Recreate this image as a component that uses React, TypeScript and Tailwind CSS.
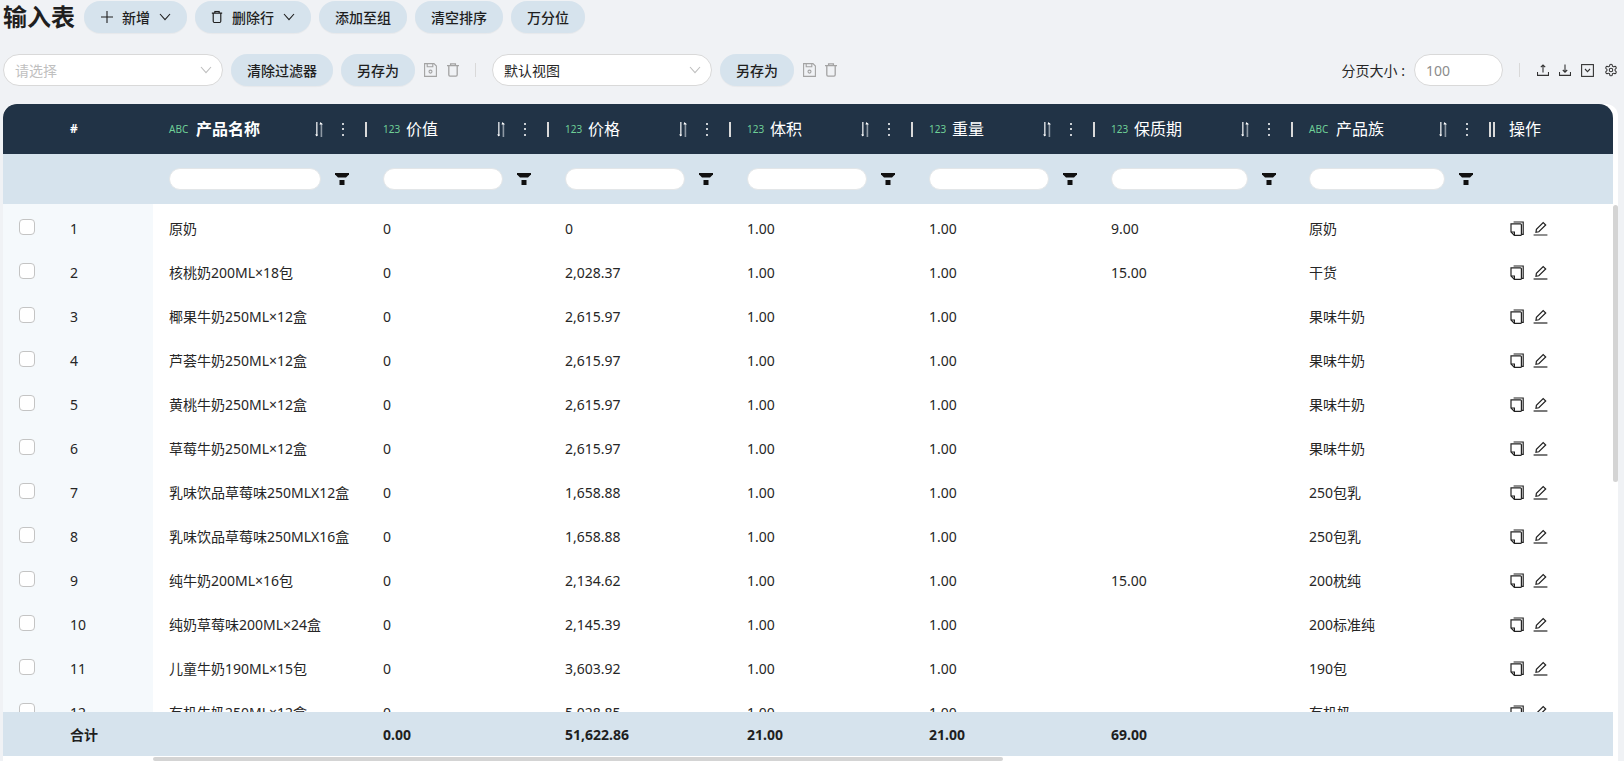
import React from "react";

const rows: [string, string, string, string, string][] = [
  ["原奶", "0", "9.00", "原奶", ""],
  ["核桃奶200ML×18包", "2,028.37", "15.00", "干货", ""],
  ["椰果牛奶250ML×12盒", "2,615.97", "", "果味牛奶", ""],
  ["芦荟牛奶250ML×12盒", "2,615.97", "", "果味牛奶", ""],
  ["黄桃牛奶250ML×12盒", "2,615.97", "", "果味牛奶", ""],
  ["草莓牛奶250ML×12盒", "2,615.97", "", "果味牛奶", ""],
  ["乳味饮品草莓味250MLX12盒", "1,658.88", "", "250包乳", ""],
  ["乳味饮品草莓味250MLX16盒", "1,658.88", "", "250包乳", ""],
  ["纯牛奶200ML×16包", "2,134.62", "15.00", "200枕纯", ""],
  ["纯奶草莓味200ML×24盒", "2,145.39", "", "200标准纯", ""],
  ["儿童牛奶190ML×15包", "3,603.92", "", "190包", ""],
  ["有机牛奶250ML×12盒", "5,028.85", "", "有机奶", ""],
];

const gridCols =
  "grid grid-cols-[150px_214px_182px_182px_182px_182px_198px_198px_122px]";

const Chevron = ({ className = "" }: { className?: string }) => (
  <svg viewBox="0 0 12 8" className={`w-[12px] h-[8px] ${className}`} fill="none" stroke="currentColor" strokeWidth="1.1">
    <path d="M1 1l5 5.6L11 1" />
  </svg>
);

const Trash = ({ className = "" }: { className?: string }) => (
  <svg viewBox="0 0 12 14" className={`w-[12px] h-[14px] ${className}`} fill="none" stroke="currentColor" strokeWidth="1.3">
    <path d="M0 2.6h12M3.6 2.6V.8h4.8v1.8M1.8 2.6v9.2c0 .8.5 1.3 1.2 1.3h6c.7 0 1.2-.5 1.2-1.3V2.6" />
  </svg>
);

const Save = ({ className = "" }: { className?: string }) => (
  <svg viewBox="0 0 13 14" className={`w-[13px] h-[14px] ${className}`} fill="none" stroke="currentColor" strokeWidth="1.1">
    <path d="M.6.6h9.4l2.4 2.4v10.4H.6zM3.2.6v3.2h5.6V.6" />
    <circle cx="6.5" cy="8.6" r="1.5" />
  </svg>
);

const Upload = ({ down = false }: { down?: boolean }) => (
  <svg viewBox="0 0 12 12" className="w-[12px] h-[12px] text-[#333]" fill="none" stroke="currentColor" strokeWidth="1.1">
    <path d="M.5 8v3.4h11V8" />
    {down ? <path d="M6 .5v7.6M3.8 6L6 8.2 8.2 6" /> : <path d="M6 8.5V1M3.8 3.2L6 1l2.2 2.2" />}
  </svg>
);

const Funnel = () => (
  <svg viewBox="0 0 14 12" className="w-[14px] h-[12px] text-[#111]" fill="currentColor">
    <path d="M0 0h14v1.4l-3 3.2H3L0 1.4z" />
    <rect x="4.5" y="7" width="5" height="5" />
  </svg>
);

const Sort = () => (
  <svg viewBox="0 0 8 15" className="ml-auto w-[8px] h-[15px]" fill="none">
    <rect x="1" y="0" width="1.6" height="14" fill="#c5cbd1" />
    <rect x="5.6" y="1" width="1.6" height="14" fill="#8e99a4" />
    <path d="M0 12.4l1.8 2.2 1-2.2z" fill="#fff" />
    <path d="M5.4 0l-.9 2.4h3.4z" fill="#fff" />
  </svg>
);

const Dots = () => (
  <span className="ml-[19px] flex flex-col gap-[3.5px]">
    <i className="block w-[2px] h-[2px] bg-[#c9ced3]" />
    <i className="block w-[2px] h-[2px] bg-[#c9ced3]" />
    <i className="block w-[2px] h-[2px] bg-[#c9ced3]" />
  </span>
);

const Sep = ({ className = "ml-[21px]" }: { className?: string }) => (
  <i className={`block w-[2px] h-[15px] bg-[#d9d9d9] shrink-0 ${className}`} />
);

const HeaderCell = ({ tag, label, bold }: { tag: string; label: string; bold?: boolean }) => (
  <div className="flex items-center pl-4 text-white">
    <span className="text-[10px] leading-none text-[#6fcf97] w-[19px] shrink-0 mr-2 whitespace-nowrap">{tag}</span>
    <span className={`text-[16px] leading-none whitespace-nowrap ${tag === "123" ? "-ml-[4px]" : ""} ${bold ? "font-bold" : "font-normal"}`}>{label}</span>
    <Sort />
    <Dots />
    <Sep />
  </div>
);

const FilterCell = ({ w }: { w: string }) => (
  <div className="flex items-center pl-4">
    <div className={`h-[22px] rounded-full bg-white border border-[#e3e6e8] ${w}`} />
    <span className="ml-[14px]">
      <Funnel />
    </span>
  </div>
);

const Btn = ({ children }: { children: React.ReactNode }) => (
  <button className="h-[32px] px-4 rounded-full bg-[#d6e3ed] shadow-[0_1px_1px_rgba(0,0,0,0.04)] text-[14px] font-medium text-[#1f1f1f] flex items-center whitespace-nowrap">
    {children}
  </button>
);

const Select = ({ text, placeholder }: { text: string; placeholder?: boolean }) => (
  <div className="h-[32px] w-[220px] rounded-full bg-white border border-[#d9d9d9] flex items-center pl-[11px] pr-[10px] text-[14px]">
    <span className={placeholder ? "text-[#bfbfbf]" : "text-[#262626]"}>{text}</span>
    <Chevron className="ml-auto text-[#bfbfbf]" />
  </div>
);

const Copy = () => (
  <svg viewBox="0 0 14 15" className="w-[14px] h-[15px] text-[#222]" fill="none" stroke="currentColor" strokeWidth="1.2">
    <path d="M3.6 1h9.6v12.4h-1.6" />
    <path d="M1 2.8h9.4c.6 0 1 .4 1 1v9.6c0 .6-.4 1-1 1H4.4L1 11z" />
    <path d="M1 11h3.4v3.4" />
  </svg>
);

const Edit = () => (
  <svg viewBox="0 0 15 15" className="w-[15px] h-[15px] text-[#222]" fill="none" stroke="currentColor" strokeWidth="1.2">
    <path d="M3 11.2l.4-2.8L10.2 1.6l2.5 2.4-6.9 6.8z" />
    <path d="M0.6 14h13.8" />
  </svg>
);

const Cell = ({ children, className = "" }: { children?: React.ReactNode; className?: string }) => (
  <div className={`flex items-center pl-4 min-w-0 ${className}`}>{children}</div>
);

export default function App() {
  return (
    <div
      className="w-[1624px] h-[761px] overflow-hidden bg-[#f0f2f5] text-[#1f1f1f] text-[14px] pt-[1px]"
      style={{ fontFamily: '"Noto Sans", "Noto Sans CJK SC", sans-serif' }}
    >
      <div className="flex items-center gap-2 pl-[3px]">
        <h1 className="text-[24px] leading-[32px] font-bold w-[73px] text-[#1f1f1f] whitespace-nowrap">输入表</h1>
        <Btn>
          <svg viewBox="0 0 12 12" className="w-[12px] h-[12px] mr-[9px] -ml-[-1px]" fill="none" stroke="currentColor" strokeWidth="1.1">
            <path d="M6 0v12M0 6h12" />
          </svg>
          新增
          <Chevron className="ml-[9px]" />
        </Btn>
        <Btn>
          <Trash className="mr-[9px] -mt-[1px] scale-90" />
          删除行
          <Chevron className="ml-[9px]" />
        </Btn>
        <Btn>添加至组</Btn>
        <Btn>清空排序</Btn>
        <Btn>万分位</Btn>
      </div>

      <div className="flex items-center mt-[21px] pl-[3px] pr-[6px]">
        <Select text="请选择" placeholder />
        <div className="ml-2 flex items-center gap-2">
          <Btn>清除过滤器</Btn>
          <Btn>另存为</Btn>
        </div>
        <Save className="ml-[9px] text-[#a3a3a3]" />
        <Trash className="ml-[10px] text-[#a3a3a3]" />
        <i className="block w-px h-[14px] bg-[#d9d9d9] ml-[16px] mr-[16px]" />
        <Select text="默认视图" />
        <div className="ml-2">
          <Btn>另存为</Btn>
        </div>
        <Save className="ml-[9px] text-[#a3a3a3]" />
        <Trash className="ml-[9px] text-[#a3a3a3]" />
        <span className="ml-auto text-[14px] text-[#262626] whitespace-nowrap">分页大小 :</span>
        <div className="ml-[9px] h-[32px] w-[89px] rounded-full bg-white border border-[#d9d9d9] flex items-center pl-[11px] text-[#8c8c8c]">
          100
        </div>
        <i className="block w-px h-[14px] bg-[#d9d9d9] ml-[16px] mr-[17px]" />
        <div className="flex items-center gap-[10px]">
          <Upload />
          <Upload down />
          <svg viewBox="0 0 13 13" className="w-[13px] h-[13px] text-[#333]" fill="none" stroke="currentColor" strokeWidth="1.1">
            <rect x=".6" y=".6" width="11.8" height="11.8" />
            <path d="M4 5l2.5 2.6L9 5" />
          </svg>
          <svg viewBox="0 0 24 24" className="w-[14px] h-[14px] text-[#333]" fill="none" stroke="currentColor" strokeWidth="1.8">
            <path d="M12.22 2h-.44a2 2 0 0 0-2 2v.18a2 2 0 0 1-1 1.73l-.43.25a2 2 0 0 1-2 0l-.15-.08a2 2 0 0 0-2.73.73l-.22.38a2 2 0 0 0 .73 2.73l.15.1a2 2 0 0 1 1 1.72v.51a2 2 0 0 1-1 1.74l-.15.09a2 2 0 0 0-.73 2.73l.22.38a2 2 0 0 0 2.73.73l.15-.08a2 2 0 0 1 2 0l.43.25a2 2 0 0 1 1 1.73V20a2 2 0 0 0 2 2h.44a2 2 0 0 0 2-2v-.18a2 2 0 0 1 1-1.73l.43-.25a2 2 0 0 1 2 0l.15.08a2 2 0 0 0 2.73-.73l.22-.39a2 2 0 0 0-.73-2.73l-.15-.08a2 2 0 0 1-1-1.74v-.5a2 2 0 0 1 1-1.74l.15-.09a2 2 0 0 0 .73-2.73l-.22-.38a2 2 0 0 0-2.73-.73l-.15.08a2 2 0 0 1-2 0l-.43-.25a2 2 0 0 1-1-1.73V4a2 2 0 0 0-2-2z" />
            <circle cx="12" cy="12" r="3" />
          </svg>
        </div>
      </div>

      <div className="mt-[18px] ml-[3px] w-[1615px] h-[657px] bg-white rounded-t-[12px] flex flex-col overflow-hidden">
        <div className="flex h-[652px]">
          <div className="w-[1610px] flex flex-col shrink-0">
            <div className={`${gridCols} h-[50px] bg-[#213346] rounded-tl-[14px] rounded-tr-[14px]`}>
              <div className="flex items-center pl-[67px] text-white font-bold text-[12px]">#</div>
              <HeaderCell tag="ABC" label="产品名称" bold />
              <HeaderCell tag="123" label="价值" />
              <HeaderCell tag="123" label="价格" />
              <HeaderCell tag="123" label="体积" />
              <HeaderCell tag="123" label="重量" />
              <HeaderCell tag="123" label="保质期" />
              <HeaderCell tag="ABC" label="产品族" />
              <div className="flex items-center text-white">
                <Sep className="ml-[2px]" />
                <span className="ml-[14px] text-[16px] leading-none">操作</span>
              </div>
            </div>
            <div className={`${gridCols} h-[50px] bg-[#d6e3ed]`}>
              <div />
              <FilterCell w="w-[152px]" />
              <FilterCell w="w-[120px]" />
              <FilterCell w="w-[120px]" />
              <FilterCell w="w-[120px]" />
              <FilterCell w="w-[120px]" />
              <FilterCell w="w-[137px]" />
              <FilterCell w="w-[136px]" />
              <div />
            </div>
            <div className="h-[508px] overflow-hidden bg-white relative">
              <div className="absolute left-0 top-0 bottom-0 w-[150px] bg-[#f5f9fc]" />
              <div className="relative pt-[2px]">
                {rows.map((r, i) => (
                  <div key={i} className={`${gridCols} h-[44px] text-[14px] text-[#262626]`}>
                    <div className="flex items-center pl-[16px]">
                      <span className="block w-[16px] h-[16px] rounded-[4px] bg-white border border-[#c4c4c4] -mt-[2px]" />
                      <span className="ml-[35px]">{i + 1}</span>
                    </div>
                    <Cell>
                      <span className="block w-[182px] truncate">{r[0]}</span>
                    </Cell>
                    <Cell>0</Cell>
                    <Cell>{r[1]}</Cell>
                    <Cell>1.00</Cell>
                    <Cell>1.00</Cell>
                    <Cell>{r[2]}</Cell>
                    <Cell>{r[3]}</Cell>
                    <div className="flex items-center gap-[9px] pl-[19px]">
                      <Copy />
                      <Edit />
                    </div>
                  </div>
                ))}
              </div>
            </div>
            <div className={`${gridCols} h-[44px] bg-[#d6e3ed] font-bold text-[14px] text-[#1f1f1f]`}>
              <div className="flex items-center pl-[67px]">合计</div>
              <div />
              <Cell>0.00</Cell>
              <Cell>51,622.86</Cell>
              <Cell>21.00</Cell>
              <Cell>21.00</Cell>
              <Cell>69.00</Cell>
              <div />
              <div />
            </div>
          </div>
          <div className="flex-1 pt-[101px]">
            <div className="h-[277px] w-[5px] rounded-full bg-[#d4d4d4]" />
          </div>
        </div>
        <div className="h-[5px] pt-[1px] pl-[150px]">
          <div className="h-[4px] w-[850px] rounded-full bg-[#d4d4d4]" />
        </div>
      </div>
    </div>
  );
}
